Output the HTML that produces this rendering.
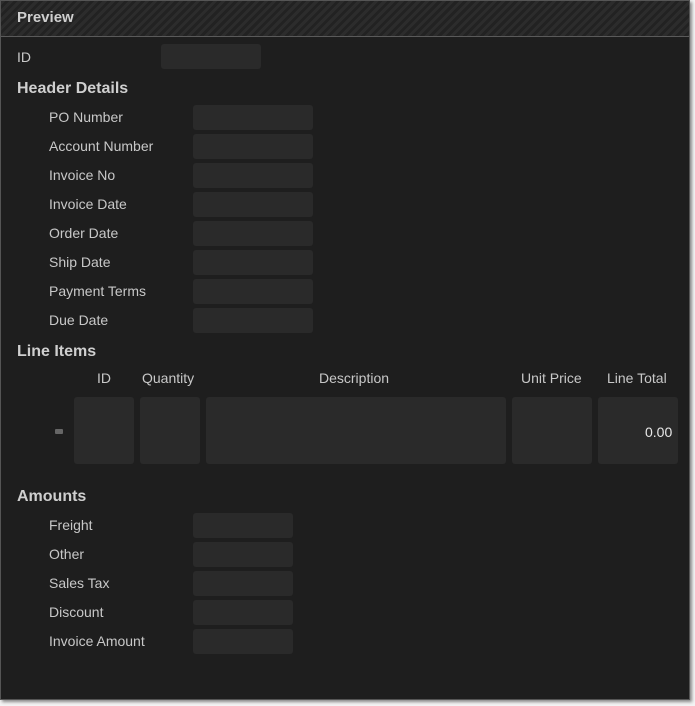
<!DOCTYPE html><html><head><style>
body{margin:0;width:695px;height:706px;background:#f4f4f4;position:relative;overflow:hidden;font-family:"Liberation Sans",sans-serif;}
#p{position:absolute;left:0;top:0;width:690px;height:700px;background:#1e1e1e;border:1px solid #555;box-sizing:border-box;box-shadow:2px 2px 3px #888;}
#h{position:absolute;left:0;top:0;right:0;height:35px;border-bottom:1px solid #5a5a5a;background:repeating-linear-gradient(135deg,#2c2c2c 0 3px,#222 3px 6px);}
.t{position:absolute;color:#c8c8c8;font-size:14px;line-height:16px;}
.b{font-weight:bold;font-size:16px;color:#cfcfcf;}
.f{position:absolute;background:#2a2a2a;border-radius:3px;}
</style></head><body><div id="p"><div id="h"></div>
<div class="t b" style="left:16px;top:9px;font-size:15px">Preview</div>
<div class="t" style="left:16px;top:48px">ID</div><div class="f" style="left:160px;top:43px;width:100px;height:25px"></div>
<div class="t b" style="left:16px;top:80px">Header Details</div>
<div class="t" style="left:48px;top:108px">PO Number</div><div class="f" style="left:192px;top:104px;width:120px;height:25px"></div>
<div class="t" style="left:48px;top:137px">Account Number</div><div class="f" style="left:192px;top:133px;width:120px;height:25px"></div>
<div class="t" style="left:48px;top:166px">Invoice No</div><div class="f" style="left:192px;top:162px;width:120px;height:25px"></div>
<div class="t" style="left:48px;top:195px">Invoice Date</div><div class="f" style="left:192px;top:191px;width:120px;height:25px"></div>
<div class="t" style="left:48px;top:224px">Order Date</div><div class="f" style="left:192px;top:220px;width:120px;height:25px"></div>
<div class="t" style="left:48px;top:253px">Ship Date</div><div class="f" style="left:192px;top:249px;width:120px;height:25px"></div>
<div class="t" style="left:48px;top:282px">Payment Terms</div><div class="f" style="left:192px;top:278px;width:120px;height:25px"></div>
<div class="t" style="left:48px;top:311px">Due Date</div><div class="f" style="left:192px;top:307px;width:120px;height:25px"></div>
<div class="t b" style="left:16px;top:343px">Line Items</div>
<div class="t" style="left:96px;top:369px">ID</div>
<div class="t" style="left:141px;top:369px">Quantity</div>
<div class="t" style="left:318px;top:369px">Description</div>
<div class="t" style="left:520px;top:369px">Unit Price</div>
<div class="t" style="left:606px;top:369px">Line Total</div>
<div style="position:absolute;left:54px;top:428px;width:8px;height:5px;background:#666;border-radius:1px"></div>
<div class="f" style="left:73px;top:396px;width:60px;height:67px"></div>
<div class="f" style="left:139px;top:396px;width:60px;height:67px"></div>
<div class="f" style="left:205px;top:396px;width:300px;height:67px"></div>
<div class="f" style="left:511px;top:396px;width:80px;height:67px"></div>
<div class="f" style="left:597px;top:396px;width:80px;height:67px"></div>
<div class="t" style="left:644px;top:423px;color:#e8e8e8">0.00</div>
<div class="t b" style="left:16px;top:488px">Amounts</div>
<div class="t" style="left:48px;top:516px">Freight</div><div class="f" style="left:192px;top:512px;width:100px;height:25px"></div>
<div class="t" style="left:48px;top:545px">Other</div><div class="f" style="left:192px;top:541px;width:100px;height:25px"></div>
<div class="t" style="left:48px;top:574px">Sales Tax</div><div class="f" style="left:192px;top:570px;width:100px;height:25px"></div>
<div class="t" style="left:48px;top:603px">Discount</div><div class="f" style="left:192px;top:599px;width:100px;height:25px"></div>
<div class="t" style="left:48px;top:632px">Invoice Amount</div><div class="f" style="left:192px;top:628px;width:100px;height:25px"></div>
</div></body></html>
